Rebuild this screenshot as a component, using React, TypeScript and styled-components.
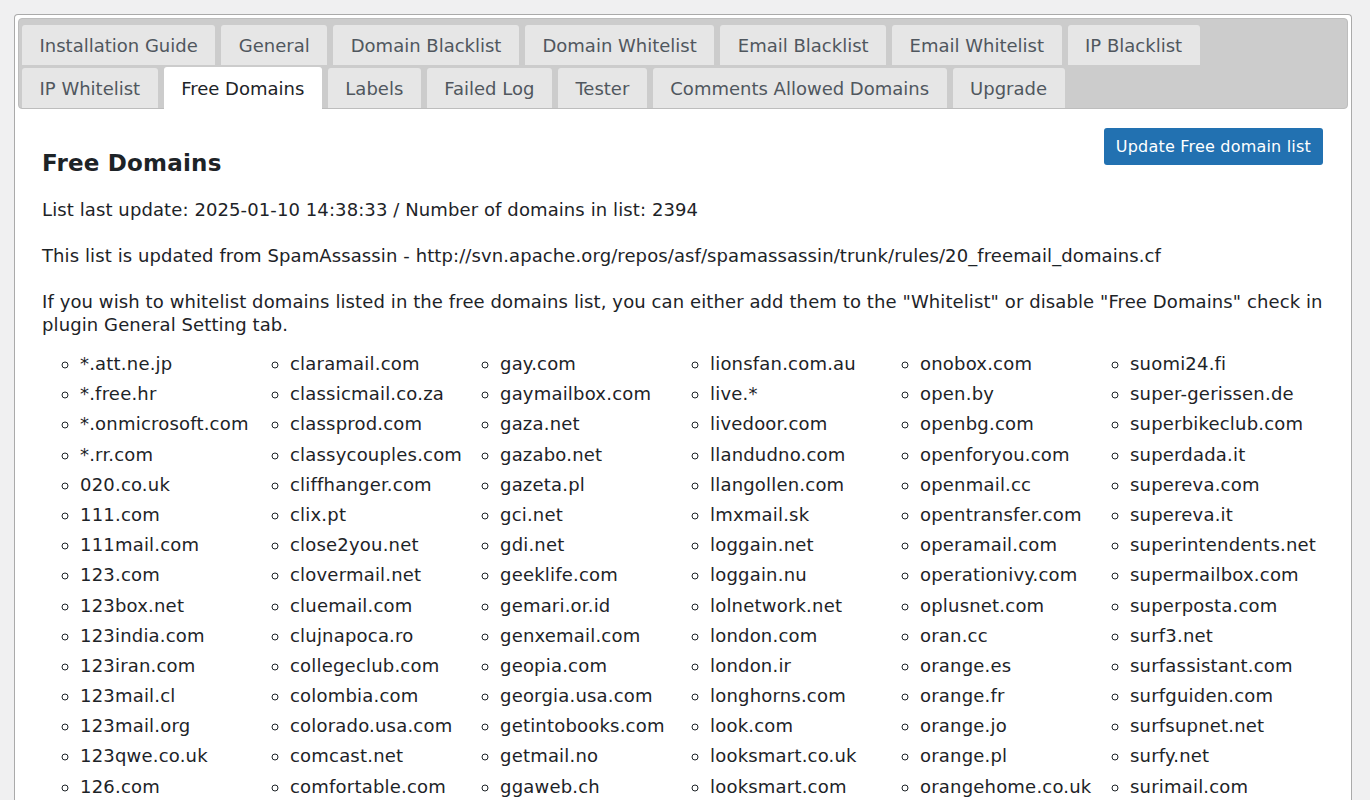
import React from "react";
import styled, { createGlobalStyle } from "styled-components";

const GlobalStyle = createGlobalStyle`
  html, body {
    margin: 0;
    padding: 0;
    background: #f0f0f1;
  }
  body {
    font-family: "DejaVu Sans", Verdana, sans-serif;
    color: #1d2327;
    letter-spacing: 0.2px;
  }
`;

const tabs = [
  "Installation Guide",
  "General",
  "Domain Blacklist",
  "Domain Whitelist",
  "Email Blacklist",
  "Email Whitelist",
  "IP Blacklist",
  "IP Whitelist",
  "Free Domains",
  "Labels",
  "Failed Log",
  "Tester",
  "Comments Allowed Domains",
  "Upgrade",
];

const domains = [
  "*.att.ne.jp", "*.free.hr", "*.onmicrosoft.com", "*.rr.com", "020.co.uk", "111.com", "111mail.com", "123.com",
  "123box.net", "123india.com", "123iran.com", "123mail.cl", "123mail.org", "123qwe.co.uk", "126.com",
  "claramail.com", "classicmail.co.za", "classprod.com", "classycouples.com", "cliffhanger.com", "clix.pt",
  "close2you.net", "clovermail.net", "cluemail.com", "clujnapoca.ro", "collegeclub.com", "colombia.com",
  "colorado.usa.com", "comcast.net", "comfortable.com",
  "gay.com", "gaymailbox.com", "gaza.net", "gazabo.net", "gazeta.pl", "gci.net", "gdi.net", "geeklife.com",
  "gemari.or.id", "genxemail.com", "geopia.com", "georgia.usa.com", "getintobooks.com", "getmail.no", "ggaweb.ch",
  "lionsfan.com.au", "live.*", "livedoor.com", "llandudno.com", "llangollen.com", "lmxmail.sk", "loggain.net",
  "loggain.nu", "lolnetwork.net", "london.com", "london.ir", "longhorns.com", "look.com", "looksmart.co.uk",
  "looksmart.com",
  "onobox.com", "open.by", "openbg.com", "openforyou.com", "openmail.cc", "opentransfer.com", "operamail.com",
  "operationivy.com", "oplusnet.com", "oran.cc", "orange.es", "orange.fr", "orange.jo", "orange.pl",
  "orangehome.co.uk",
  "suomi24.fi", "super-gerissen.de", "superbikeclub.com", "superdada.it", "supereva.com", "supereva.it",
  "superintendents.net", "supermailbox.com", "superposta.com", "surf3.net", "surfassistant.com", "surfguiden.com",
  "surfsupnet.net", "surfy.net", "surimail.com",
];

const App = () => {
  return (
    <Page>
      <GlobalStyle />
      <Container>
        <TabBar>
          {tabs.map((t) => (
            <Tab key={t} active={t === "Free Domains"}>
              {t}
            </Tab>
          ))}
        </TabBar>
        <Panel>
          <Header>
            <Title>Free Domains</Title>
            <Button>Update Free domain list</Button>
          </Header>
          <Text first>List last update: 2025-01-10 14:38:33 / Number of domains in list: 2394</Text>
          <Text>
            This list is updated from SpamAssassin - http://svn.apache.org/repos/asf/spamassassin/trunk/rules/20_freemail_domains.cf
          </Text>
          <Text>
            If you wish to whitelist domains listed in the free domains list, you can either add them to the "Whitelist"
            or disable "Free Domains" check in plugin General Setting tab.
          </Text>
          <DomainList>
            {domains.map((d) => (
              <Item key={d}>{d}</Item>
            ))}
          </DomainList>
        </Panel>
      </Container>
    </Page>
  );
};

export default App;

const Page = styled.div`
  padding: 14px 18px 0 14px;
  min-height: 800px;
  box-sizing: border-box;
`;

const Container = styled.div`
  background: #fff;
  border: 1px solid #aaaaaa;
  border-bottom: none;
  border-radius: 4px 4px 0 0;
  padding: 3px 3px 0 3px;
`;

const TabBar = styled.div`
  background: #cccccc;
  border: 1px solid #bdbdbd;
  border-radius: 4px;
  padding: 6px 140px 0 3px;
  display: flex;
  flex-wrap: wrap;
  column-gap: 6px;
  row-gap: 3px;
`;

const Tab = styled.div<{ active?: boolean }>`
  background: ${(p) => (p.active ? "#ffffff" : "#e6e6e6")};
  color: ${(p) => (p.active ? "#1d2327" : "#50575e")};
  border-radius: 3px 3px 0 0;
  padding: 1px 17.5px 0;
  box-sizing: border-box;
  height: ${(p) => (p.active ? "42px" : "40px")};
  margin-bottom: ${(p) => (p.active ? "-1px" : "0")};
  margin-top: ${(p) => (p.active ? "-1px" : "0")};
  display: flex;
  align-items: center;
  font-size: 18px;
  letter-spacing: 0;
  white-space: nowrap;
`;

const Panel = styled.div`
  padding: 18px 18px 0 24px;
`;

const Header = styled.div`
  display: flex;
  justify-content: space-between;
  align-items: flex-start;
`;

const Title = styled.h2`
  font-size: 23px;
  font-weight: bold;
  margin: 22px 0 0 0;
  line-height: 28px;
`;

const Button = styled.button`
  background: #2271b1;
  color: #fff;
  border: none;
  border-radius: 3px;
  font-family: "DejaVu Sans", Verdana, sans-serif;
  font-size: 16px;
  letter-spacing: 0.2px;
  height: 37px;
  margin: 1px 7px 0 0;
  padding: 0 12px;
  cursor: pointer;
`;

const Text = styled.p<{ first?: boolean }>`
  font-size: 18px;
  line-height: 23px;
  letter-spacing: 0.1px;
  margin: ${(p) => (p.first ? "21px" : "23px")} 0 0 0;
`;

const DomainList = styled.ul`
  columns: 6;
  column-gap: 0;
  column-fill: balance;
  width: 1260px;
  padding: 0;
  margin: 16px 0 0 0;
  list-style-type: circle;
`;

const Item = styled.li`
  font-size: 18px;
  line-height: 23px;
  margin: 0 0 7.2px 38px;
  white-space: nowrap;
  break-inside: avoid;
`;
